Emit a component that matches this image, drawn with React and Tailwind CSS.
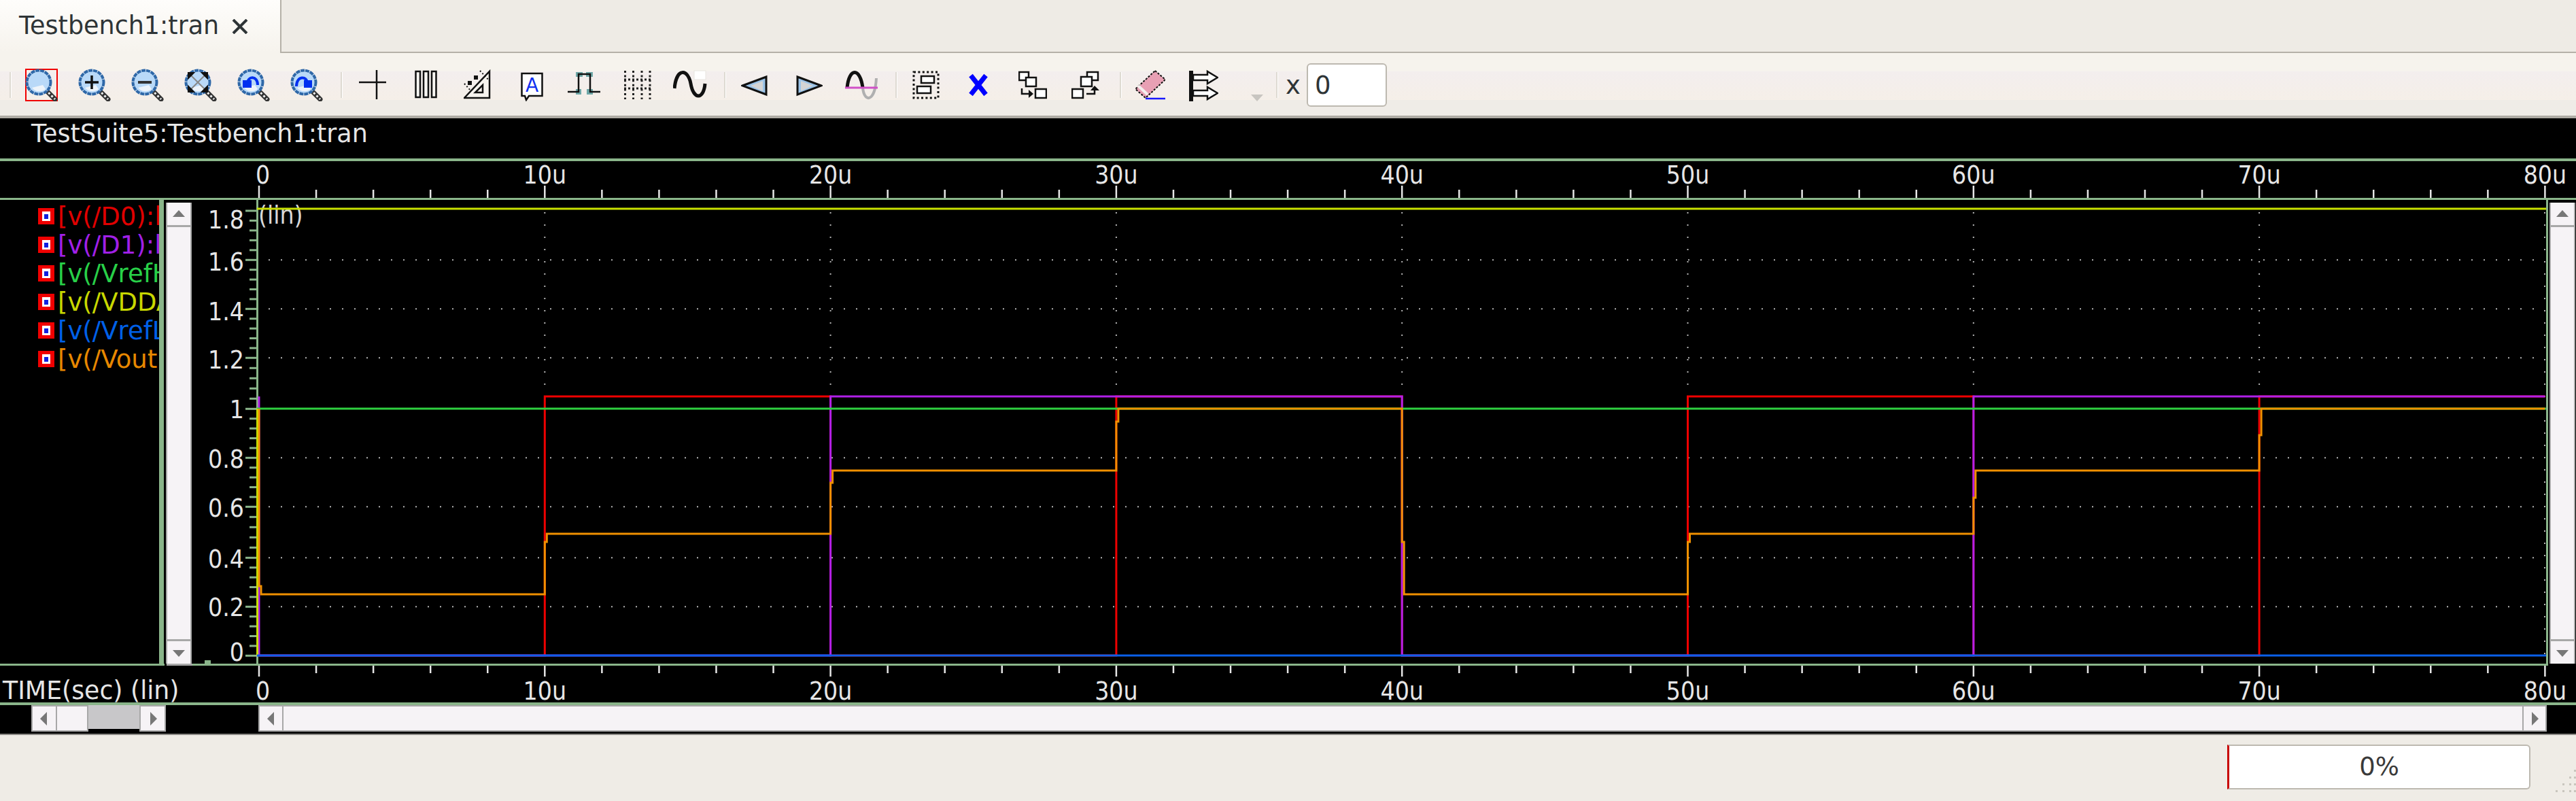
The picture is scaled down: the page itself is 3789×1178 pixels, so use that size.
import React from "react";

const X0 = 381;
const XPER = 42.03;
const tx = (t) => X0 + XPER * t;
const TENS = [0, 10, 20, 30, 40, 50, 60, 70, 80];
const MINOR_X = Array.from({ length: 41 }, (_, i) => i * 2);

const MAJOR_Y = [
  [0, 964.3],
  [0.2, 892.3],
  [0.4, 820.3],
  [0.6, 745.3],
  [0.8, 673.3],
  [1, 601.3],
  [1.2, 526.3],
  [1.4, 454.3],
  [1.6, 382.3],
  [1.8, 310],
];
const Y25 = 874;
const Y50 = 785;
const Y75 = 692;
const Y100 = 601;
const YHI = 583;
const Y0 = 964;

const LEGEND = [
  ["[v(/D0):l", "text-[#e00000]"],
  ["[v(/D1):l", "text-[#a020e8]"],
  ["[v(/VrefH", "text-[#28d048]"],
  ["[v(/VDDA", "text-[#c8d800]"],
  ["[v(/VrefL", "text-[#0060e8]"],
  ["[v(/Vout", "text-[#e88800]"],
];

function Label({ x, y, anchor = "middle", fill = "#e6e6e6", children }) {
  return (
    <text
      transform={`translate(${x} ${y}) scale(0.9 1)`}
      textAnchor={anchor}
      fontSize="37"
      fill={fill}
    >
      {children}
    </text>
  );
}

function Sep({ className }) {
  return <div className={`w-[3px] h-[38px] bg-[#dedad2] border-r border-white ${className}`} />;
}

function Glass({ className, children }) {
  return (
    <svg width="48" height="48" viewBox="0 0 48 48" className={className}>
      <line x1="30" y1="31" x2="44" y2="45" stroke="#333" strokeWidth="7" strokeLinecap="round" />
      <line x1="30" y1="31" x2="44" y2="45" stroke="#eee" strokeWidth="3" strokeDasharray="3 3" />
      <circle cx="20" cy="20" r="17.5" fill="#b9d9f8" stroke="#2f68a8" strokeWidth="4" strokeDasharray="6 1" />
      <path d="M10 28 A14 14 0 0 0 30 30 L26 24 Z" fill="#eef4fa" />
      {children}
    </svg>
  );
}

function Ico({ w, className, children }) {
  return (
    <svg width={w} height="48" viewBox={`0 0 ${w} 48`} className={className}>
      {children}
    </svg>
  );
}

function Toolbar() {
  return (
    <div className="flex items-center h-[96px] pl-[14px] pt-[2px] border-b-[4px] border-[#aeaba4] bg-[linear-gradient(#f6f3ed_29%,#f3eeee_29%,#f5efe8_75%,#efece7_75%)]">
      <Sep />
      <div className="ml-[20px] w-[48px] h-[48px] border-[2px] border-[#f00000]">
        <Glass className="-ml-[2px] -mt-[2px]" />
      </div>
      <Glass className="ml-[30px]">
        <path d="M20 10 V30 M10 20 H30" stroke="#111" strokeWidth="3.5" />
      </Glass>
      <Glass className="ml-[30px]">
        <path d="M10 20 H30" stroke="#333" strokeWidth="4" />
      </Glass>
      <Glass className="ml-[30px]">
        <path d="M10 10 L30 30 M30 10 L10 30" stroke="#888" strokeWidth="2" />
        <path d="M6 14 L6 6 L14 6 Z M34 14 L34 6 L26 6 Z M6 26 L6 34 L14 34 Z M34 26 L34 34 L26 34 Z" fill="#111" stroke="#111" strokeWidth="2" />
      </Glass>
      <Glass className="ml-[30px]">
        <path d="M15 22 C15 10 30 10 30 24" fill="none" stroke="#0030f0" strokeWidth="4" />
        <path d="M8 17 L21 17 L21 28 L8 28 Z" fill="#0030f0" />
      </Glass>
      <Glass className="ml-[30px]">
        <path d="M9 26 C9 10 25 10 25 22" fill="none" stroke="#0030f0" strokeWidth="4" />
        <path d="M20 17 L32 17 L32 28 L20 28 Z" fill="#0030f0" />
      </Glass>
      <Sep className="ml-[26px]" />
      <Ico w={40} className="ml-[24px]">
        <path d="M0 20 H40 M26 2 V45" stroke="#111" strokeWidth="2.5" />
      </Ico>
      <Ico w={33} className="ml-[42px]">
        <path d="M1.5 4 H8 V42 H1.5 Z M13 4 H20 V42 H13 Z M25 4 H31.5 V42 H25 Z" fill="#f8f6f2" stroke="#111" strokeWidth="2.5" />
      </Ico>
      <Ico w={40} className="ml-[39px]">
        <path d="M38 4 V43 H1 Z M28 24 V35 H17 Z" fill="#f6f3ee" fillRule="evenodd" stroke="#111" strokeWidth="2.5" />
        <path d="M24 3 L38 18 M1 22 L10 32" stroke="#111" strokeWidth="2" strokeDasharray="2 3" />
        <rect x="15" y="10" width="6" height="6" fill="#111" />
        <rect x="6" y="18" width="6" height="6" fill="#111" />
      </Ico>
      <Ico w={33} className="ml-[44px]">
        <path d="M1.5 7 H31.5 V40 H12 L8 46 L6 40 H1.5 Z" fill="#fff" stroke="#111" strokeWidth="2.5" />
        <text x="16.5" y="34" textAnchor="middle" fontSize="28" fill="#1030f0">
          A
        </text>
      </Ico>
      <Ico w={48} className="ml-[36px]">
        <path d="M12 5 H22 V12 H12 Z M27 5 H37 V12 H27 Z M12 30 H20 V38 H12 Z M28 30 H37 V38 H28 Z" fill="#6fa8a8" />
        <path d="M0 34 H16 V8 H33 V34 H48" fill="none" stroke="#111" strokeWidth="2.5" />
      </Ico>
      <Ico w={40} className="ml-[35px]">
        <g stroke="#222" strokeWidth="3" strokeDasharray="3 3.6" fill="none">
          <path d="M1.5 3 V45 M13.5 3 V45 M26 3 V45 M38 3 V45" />
          <path d="M0 16 H40 M0 29 H40" strokeDasharray="3 3" />
        </g>
      </Ico>
      <Ico w={50} className="ml-[32px]">
        <rect x="31" y="3" width="17" height="13" fill="#fff" stroke="#e8e5e0" />
        <path d="M2 29 C5 -2 22 0 26 22 C30 46 45 46 47 22" fill="none" stroke="#111" strokeWidth="5" />
      </Ico>
      <Sep className="ml-[25px]" />
      <Ico w={39} className="ml-[22px]">
        <path d="M2 25 L37 12 V38 Z" fill="#9cc4e8" stroke="#111" strokeWidth="3" />
        <path d="M14 25 L32 18 V33 Z" fill="#d4d4d4" />
      </Ico>
      <Ico w={39} className="ml-[42px]">
        <path d="M37 25 L2 12 V38 Z" fill="#9cc4e8" stroke="#111" strokeWidth="3" />
        <path d="M25 25 L7 18 V33 Z" fill="#d4d4d4" />
      </Ico>
      <Ico w={48} className="ml-[33px]">
        <path d="M26 28 C28 50 44 50 46 14" fill="none" stroke="#b0b0b0" strokeWidth="4" />
        <path d="M3 28 C6 -2 22 -2 26 28" fill="none" stroke="#111" strokeWidth="5" />
        <path d="M0 28 H48" stroke="#d050c8" strokeWidth="3" />
      </Ico>
      <Sep className="ml-[26px]" />
      <Ico w={40} className="ml-[22px]">
        <rect x="2" y="5" width="36" height="38" fill="none" stroke="#111" strokeWidth="3" strokeDasharray="3 3.4" />
        <rect x="13" y="11" width="19" height="10" fill="#fff" stroke="#111" strokeWidth="2.5" />
        <rect x="7" y="26" width="20" height="10" fill="#fff" stroke="#111" strokeWidth="2.5" />
      </Ico>
      <Ico w={28} className="ml-[43px]">
        <path d="M3 10 L25 38 M25 10 L3 38" stroke="#0000ff" strokeWidth="7" />
      </Ico>
      <Ico w={42} className="ml-[45px]">
        <rect x="1" y="5" width="14" height="12" fill="#fff" stroke="#111" strokeWidth="2.5" />
        <rect x="11" y="13" width="15" height="13" fill="#fff" stroke="#111" strokeWidth="2.5" />
        <rect x="25" y="30" width="16" height="13" fill="#fff" stroke="#111" strokeWidth="2.5" />
        <path d="M5 29 V37 H16" fill="none" stroke="#111" strokeWidth="2.5" />
        <path d="M15 31 L22 37 L15 43 Z" fill="#111" />
      </Ico>
      <Ico w={42} className="ml-[36px]">
        <rect x="23" y="5" width="16" height="12" fill="#fff" stroke="#111" strokeWidth="2.5" />
        <rect x="14" y="12" width="16" height="14" fill="#fff" stroke="#111" strokeWidth="2.5" />
        <rect x="1" y="30" width="16" height="13" fill="#fff" stroke="#111" strokeWidth="2.5" />
        <path d="M22 37 H34 V30" fill="none" stroke="#111" strokeWidth="2.5" />
        <path d="M28 32 L34 25 L41 32 Z" fill="#111" />
      </Ico>
      <Sep className="ml-[29px]" />
      <Ico w={44} className="ml-[20px]">
        <path d="M29 3 L44 16 L15 43 L0 30 Z" fill="#e8a0b4" stroke="#111" strokeWidth="2" strokeDasharray="3 2" />
        <path d="M4 25 L18 38" stroke="#f4f0ee" strokeWidth="4" />
        <path d="M15 44 H44" stroke="#1818ff" strokeWidth="2.5" />
      </Ico>
      <Ico w={43} className="ml-[35px]">
        <rect x="0" y="3" width="6" height="45" fill="#111" />
        <path d="M6 9 H27 V4 L42 13 L27 22 V17 H6 Z M6 32 H27 V27 L42 36 L27 45 V40 H6 Z" fill="#fff" stroke="#111" strokeWidth="2.5" />
      </Ico>
      <Ico w={18} className="ml-[48px]">
        <path d="M0 38 H18 L9 48 Z" fill="#c8c5c0" />
      </Ico>
      <Sep className="ml-[19px]" />
      <span className="ml-[11px] w-[20px] text-[37px] leading-none text-[#2e3436]">x</span>
      <div className="ml-[11px] w-[118px] h-[64px] flex items-center pl-[10px] bg-white border-[2px] border-[#bdb9b0] rounded-[6px]">
        <span className="text-[37px] leading-none text-[#2e3436]">0</span>
      </div>
    </div>
  );
}

function VButton({ down }) {
  return (
    <div
      className={`h-[36px] flex items-center justify-center bg-[#f6f3f6] border-[#a8a8a8] ${
        down ? "border-t-[3px]" : "border-b-[3px]"
      }`}
    >
      <svg width="18" height="12" viewBox="0 0 18 12">
        <path d={down ? "M0 2 H18 L9 12 Z" : "M0 10 H18 L9 0 Z"} fill="#777" />
      </svg>
    </div>
  );
}

function VScroll({ className }) {
  return (
    <div className={`w-[38px] mt-[4px] flex flex-col justify-between bg-[#f6f3f6] border-x-[2px] border-[#a8a8a8] ${className}`}>
      <VButton />
      <VButton down />
    </div>
  );
}

function HButton({ right, className }) {
  return (
    <div className={`h-[39px] flex items-center justify-center bg-[#f6f3f6] border-[2px] border-[#a8a8a8] ${className}`}>
      <svg width="12" height="20" viewBox="0 0 12 20">
        <path d={right ? "M2 0 V20 L12 10 Z" : "M10 0 V20 L0 10 Z"} fill="#777" />
      </svg>
    </div>
  );
}

function Plot() {
  const minors = [];
  MAJOR_Y.slice(0, -1).forEach(([, y], i) => {
    const top = MAJOR_Y[i + 1][1];
    for (let k = 1; k < 5; k++) minors.push(y + ((top - y) * k) / 5);
  });
  const orange = `M${tx(0)} ${Y100} V862 H${tx(0) + 3} V${Y25} H${tx(10)} V797 H${tx(10) + 3} V${Y50} H${tx(20)} V710 H${tx(20) + 3} V${Y75} H${tx(30)} V620 H${tx(30) + 3} V${Y100} H${tx(40)} V797 H${tx(40) + 3} V${Y25} H${tx(50)} V797 H${tx(50) + 3} V${Y50} H${tx(60)} V732 H${tx(60) + 3} V${Y75} H${tx(70)} V640 H${tx(70) + 3} V${Y100} H${tx(80)}`;
  const red = `M${tx(0)} ${Y0} H${tx(10)} V${YHI} H${tx(20)} V${Y0} H${tx(30)} V${YHI} H${tx(40)} V${Y0} H${tx(50)} V${YHI} H${tx(60)} V${Y0} H${tx(70)} V${YHI} H${tx(80)}`;
  const purple = `M${tx(0)} ${YHI} V${Y0} H${tx(20)} V${YHI} H${tx(40)} V${Y0} H${tx(60)} V${YHI} H${tx(80)}`;

  return (
    <svg width="3462" height="682" viewBox="283 294 3462 682" className="block">
      {/* y axis */}
      <g stroke="#8ab58a" strokeWidth="3">
        {minors.map((y) => (
          <line key={y} x1="367" x2="378" y1={y} y2={y} />
        ))}
        {MAJOR_Y.map(([v, y]) => (
          <line key={v} x1="361" x2="378" y1={y} y2={y} />
        ))}
        <line x1="378.5" x2="378.5" y1="294" y2="976" />
      </g>
      <rect x="301" y="971" width="9" height="5" fill="#8ab58a" />
      <Label x={359} y={336} anchor="end">1.8</Label>
      <Label x={359} y={398} anchor="end">1.6</Label>
      <Label x={359} y={471} anchor="end">1.4</Label>
      <Label x={359} y={542} anchor="end">1.2</Label>
      <Label x={359} y={615} anchor="end">1</Label>
      <Label x={359} y={688} anchor="end">0.8</Label>
      <Label x={359} y={760} anchor="end">0.6</Label>
      <Label x={359} y={835} anchor="end">0.4</Label>
      <Label x={359} y={906} anchor="end">0.2</Label>
      <Label x={359} y={972} anchor="end">0</Label>
      <Label x={380} y={329} anchor="start" fill="#d8d8d8">(lin)</Label>

      {/* grid */}
      <g stroke="#b4b4b4" strokeWidth="2" strokeDasharray="2 16" fill="none">
        {[382.3, 454.3, 526.3, 673.3, 745.3, 820.3, 892.3].map((y) => (
          <line key={y} x1="395" x2="3740" y1={y} y2={y} />
        ))}
        {TENS.slice(1, -1).map((t) => (
          <line key={t} x1={tx(t)} x2={tx(t)} y1="312" y2={YHI} />
        ))}
        <line x1="3743" x2="3743" y1="312" y2={Y0} />
      </g>

      {/* signals */}
      <g fill="none" strokeWidth="3">
        <path d={red} stroke="#ee0000" />
        <path d={purple} stroke="#b020e8" />
        <path d={`M378 ${Y100} H3745`} stroke="#2fd040" />
        <path d="M378.5 964 V601 M378 307 H3745" stroke="#c8e000" />
        <path d={`M378 ${Y0} H3745`} stroke="#0a5fe8" />
        <path d={orange} stroke="#f09000" />
      </g>
    </svg>
  );
}

function TimeAxis({ viewY, tickTop, majorEnd, minorStart, minorEnd, labelY }) {
  return (
    <svg width="3789" height="54" viewBox={`0 ${viewY} 3789 54`} className="block overflow-visible">
      <g stroke="#e6e6e6" strokeWidth="2.5">
        {MINOR_X.map((t) => {
          const major = t % 10 === 0;
          return (
            <line
              key={t}
              x1={tx(t)}
              x2={tx(t)}
              y1={major ? tickTop : minorStart}
              y2={major ? majorEnd : minorEnd}
            />
          );
        })}
      </g>
      {TENS.map((t) =>
        t === 0 ? (
          <Label key={t} x={376} y={labelY} anchor="start">0</Label>
        ) : (
          <Label key={t} x={tx(t)} y={labelY}>{`${t}u`}</Label>
        )
      )}
    </svg>
  );
}

export default function App() {
  return (
    <div className="w-[3789px] h-[1178px] overflow-hidden flex flex-col bg-black font-['DejaVu_Sans',sans-serif]">
      {/* tab strip */}
      <div className="flex h-[78px] bg-[#eeebe5]">
        <div className="w-[414px] flex items-center pl-[28px] pb-[1px] border-r-[2px] border-[#b5b1a8] bg-gradient-to-b from-[#fefdfb] to-[#f6f3ed]">
          <span className="w-[313px] text-[36.5px] leading-none text-[#2e3436] whitespace-nowrap">Testbench1:tran</span>
          <svg width="24" height="22" viewBox="0 0 24 22">
            <path d="M2 1 L22 21 M22 1 L2 21" stroke="#2e3436" strokeWidth="4" />
          </svg>
        </div>
        <div className="flex-1 border-b-[2px] border-[#b5b1a8]" />
      </div>

      <Toolbar />

      {/* title */}
      <div className="h-[59px] pl-[46px] pt-[3px] text-[36.5px] leading-[40px] text-[#e6e6e6] whitespace-nowrap">
        TestSuite5:Testbench1:tran
      </div>
      <div className="h-[4px] bg-[#8ab58a]" />
      <TimeAxis viewY={237} tickTop={273} majorEnd={291} minorStart={279} minorEnd={291} labelY={270} />
      <div className="h-[3px] bg-[#8ab58a]" />

      {/* plot row */}
      <div className="flex h-[682px]">
        <div className="w-[234px] pt-[12px] pl-[56px] flex flex-col gap-[18px] overflow-hidden">
          {LEGEND.map(([name, color]) => (
            <div key={name} className="flex items-center h-[24px]">
              <div className="w-[24px] h-[24px] shrink-0 flex items-center justify-center bg-[#f00000]">
                <div className="w-[12px] h-[14px] flex items-center justify-center bg-white">
                  <div className="w-[6px] h-[7px] bg-[#1020e0]" />
                </div>
              </div>
              <span className={`ml-[5px] text-[37px] leading-none whitespace-nowrap ${color}`}>{name}</span>
            </div>
          ))}
        </div>
        <div className="w-[7px] bg-[#8ab58a]" />
        <VScroll className="ml-[3px] mr-[1px]" />
        <Plot />
        <div className="w-[3px] bg-[#8ab58a]" />
        <VScroll className="ml-[2px]" />
      </div>

      {/* bottom edge of the plot, broken by the two vertical scrollbars */}
      <div className="flex h-[3px]">
        <div className="w-[242px] bg-[#8ab58a]" />
        <div className="ml-[3px] w-[38px] bg-[#a8a8a8]" />
        <div className="w-[3465px] bg-[#8ab58a]" />
      </div>
      <TimeAxis viewY={979} tickTop={979} majorEnd={995} minorStart={979} minorEnd={990} labelY={1029} />
      <div className="relative h-0">
        <span className="absolute left-[4px] -top-[37px] text-[37px] leading-[40px] text-[#e6e6e6] whitespace-nowrap origin-left scale-x-[0.98]">TIME(sec) (lin)</span>
      </div>
      <div className="h-[4px] bg-[#8ab58a]" />

      {/* bottom scrollbars */}
      <div className="flex items-start h-[42px] pl-[46px]">
        <HButton className="w-[38px]" />
        <div className="w-[46px] h-[39px] bg-[#f6f3f6] border-y-[2px] border-r-[2px] border-[#a8a8a8]" />
        <div className="w-[75px] h-[35px] bg-[#c8c7c9]" />
        <HButton right className="w-[39px]" />
        <div className="ml-[136px] w-[3366px] flex">
          <HButton className="w-[37px]" />
          <div className="flex-1 h-[39px] bg-[#f6f3f6] border-y-[2px] border-[#a8a8a8]" />
          <HButton right className="w-[36px]" />
        </div>
      </div>

      {/* status bar */}
      <div className="relative flex-1 flex justify-end items-center pr-[67px] pb-[4px] bg-[#efece6] border-t-[2px] border-[#8c8a86]">
        <div className="w-[446px] h-[66px] flex items-center justify-center bg-white border-[2px] border-[#bdb9b0] border-l-[3px] border-l-[#c80000] rounded-r-[6px]">
          <span className="text-[37px] leading-none text-[#3a3a3a]">0%</span>
        </div>
        <svg width="30" height="34" viewBox="0 0 30 34" className="absolute right-0 bottom-[12px]">
          <g fill="#c9c6be">
            <rect x="27" y="0" width="3" height="3" />
            <rect x="20" y="10" width="3" height="3" />
            <rect x="27" y="10" width="3" height="3" />
            <rect x="10" y="20" width="3" height="3" />
            <rect x="20" y="20" width="3" height="3" />
            <rect x="27" y="20" width="3" height="3" />
            <rect x="0" y="30" width="3" height="3" />
            <rect x="10" y="30" width="3" height="3" />
            <rect x="20" y="30" width="3" height="3" />
            <rect x="27" y="30" width="3" height="3" />
          </g>
        </svg>
      </div>
    </div>
  );
}
